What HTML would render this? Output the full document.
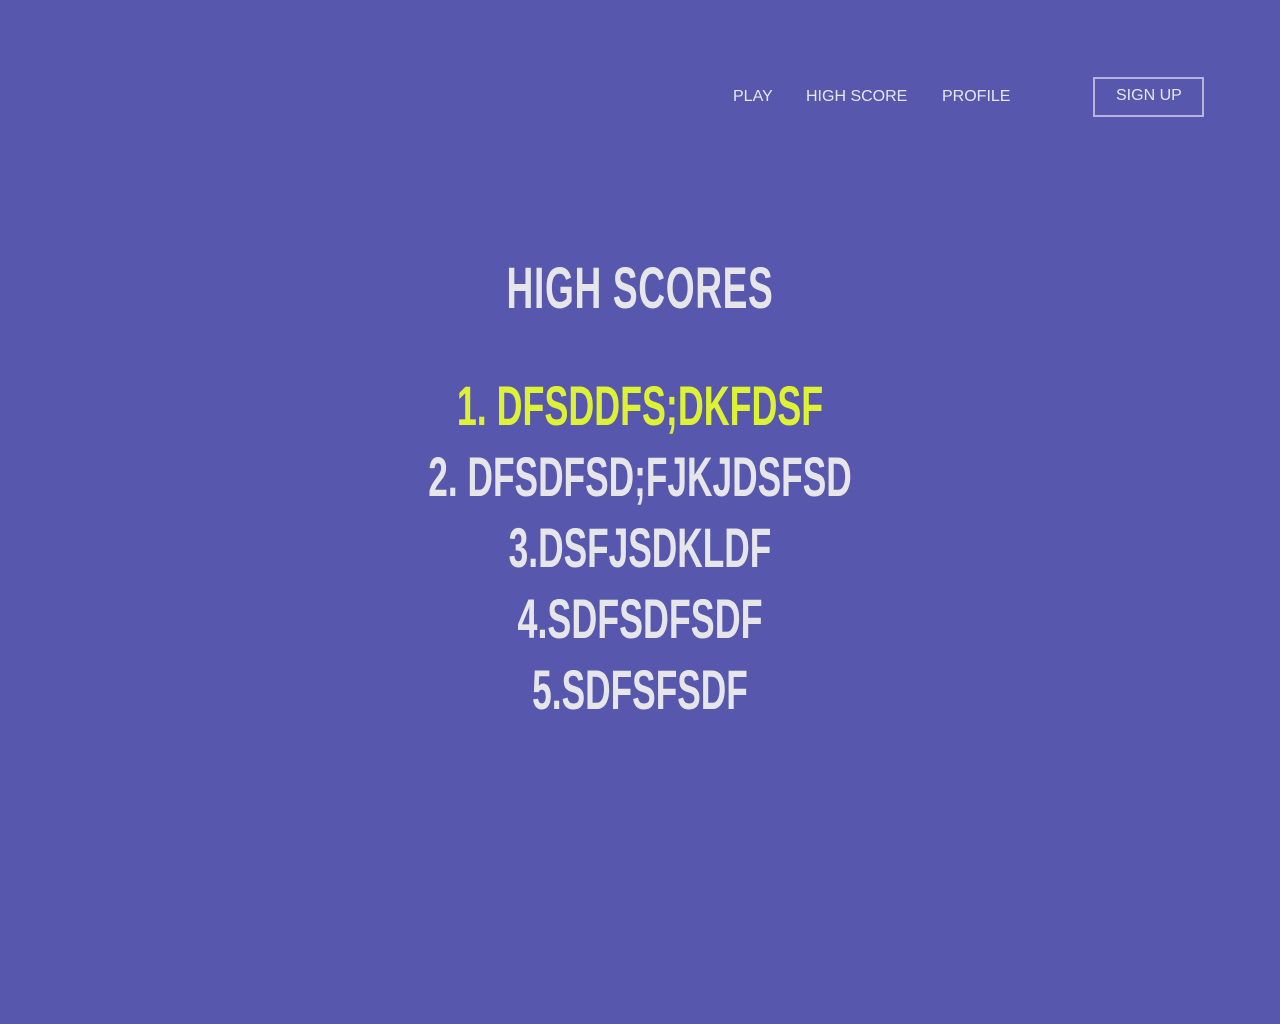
<!DOCTYPE html>
<html><head><meta charset="utf-8"><style>
html,body{margin:0;padding:0;width:1280px;height:1024px;background:#5757ad;overflow:hidden;font-family:"Liberation Sans",Arial,sans-serif;}
.n{position:absolute;top:89px;font-size:16px;line-height:16px;color:#e6e6ee;}
.btn{position:absolute;left:1093px;top:77px;width:107px;height:36px;border:2px solid #b4b4dc;}
.l{position:absolute;left:640px;white-space:nowrap;font-weight:bold;line-height:1;color:#e6e6ea;transform:translateX(-50%) scaleX(0.63);}
</style></head><body>
<div class="n" style="left:733px">PLAY</div>
<div class="n" style="left:806px">HIGH SCORE</div>
<div class="n" style="left:942px">PROFILE</div>
<div class="btn"></div>
<div class="n" style="left:1116px;top:88px">SIGN UP</div>
<div class="l" style="top:260px;font-size:58px;letter-spacing:1px;transform:translateX(-50%) scaleX(0.64)">HIGH SCORES</div>
<div class="l" style="top:378px;font-size:56px;color:#def235;transform:translateX(-50%) scaleX(0.64)">1. DFSDDFS;DKFDSF</div>
<div class="l" style="top:449px;font-size:56px">2. DFSDFSD;FJKJDSFSD</div>
<div class="l" style="top:520px;font-size:56px">3.DSFJSDKLDF</div>
<div class="l" style="top:591px;font-size:56px;transform:translateX(-50%) scaleX(0.64)">4.SDFSDFSDF</div>
<div class="l" style="top:662px;font-size:56px">5.SDFSFSDF</div>
</body></html>
